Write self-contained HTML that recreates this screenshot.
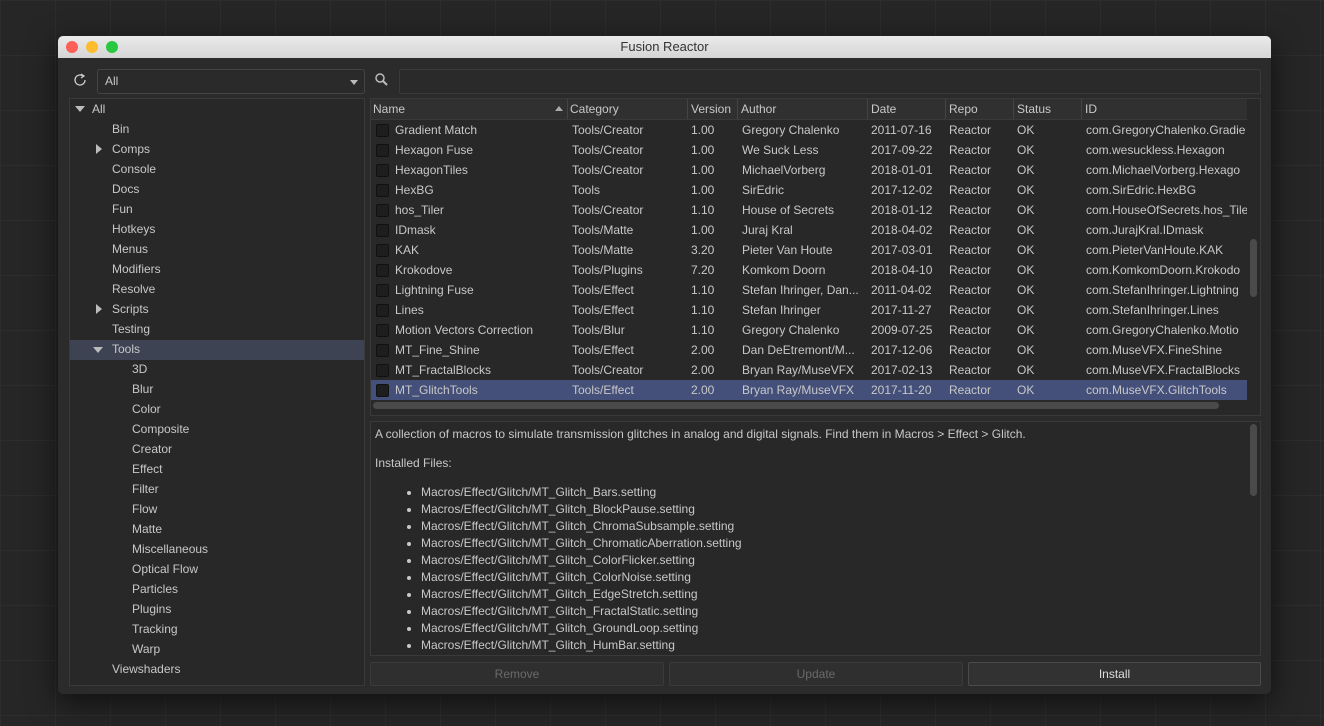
<!DOCTYPE html>
<html><head><style>
body{margin:0;width:1324px;height:726px;background:#262626;font-family:"Liberation Sans",sans-serif;font-size:12px;color:#c8c8c8;position:relative;overflow:hidden;
background-image:linear-gradient(#2d2d2d 1px,transparent 1px),linear-gradient(90deg,#2d2d2d 1px,transparent 1px);background-size:55px 55px;}
.a{position:absolute}
#win{left:58px;top:36px;width:1213px;height:658px;background:#2b2b2b;border-radius:5px;overflow:hidden;box-shadow:0 8px 30px rgba(0,0,0,.6)}
#title{left:0;top:0;width:1213px;height:22px;background:linear-gradient(#ebebeb,#d5d5d5);color:#333;text-align:center;line-height:22px;font-size:13px}
.dot{top:5px;width:12px;height:12px;border-radius:50%}
.t{position:absolute;white-space:nowrap;line-height:20px}
.tri{position:absolute;width:0;height:0}
.row{position:absolute;left:0;width:876px;height:20px}
.cb{position:absolute;left:5px;top:4px;width:11px;height:11px;background:#1e1e1e;border:1px solid #111;border-radius:2px}
.btn{position:absolute;top:626px;height:22px;border:1px solid #3a3a3a;background:#2f2f2f;border-radius:2px;text-align:center;line-height:22px}
li{line-height:17px}
</style></head><body>
<div id="win" class="a">
<div id="title" class="a">Fusion Reactor</div>
<div class="a dot" style="left:8px;background:#fc5f57"></div>
<div class="a dot" style="left:28px;background:#fdbc2e"></div>
<div class="a dot" style="left:48px;background:#28c840"></div>
<svg class="a" style="left:14px;top:36px" width="16" height="16" viewBox="0 0 16 16"><path d="M13 8a5 5 0 1 1-2-4" fill="none" stroke="#ccc" stroke-width="1.3"/><path d="M9 2l3 2-3 2" fill="none" stroke="#ccc" stroke-width="1.3"/></svg>
<div class="a" style="left:39px;top:33px;width:266px;height:23px;border:1px solid #444;border-radius:3px;background:#2a2a2a"><span class="t" style="left:7px;top:1px">All</span><div class="tri" style="left:252px;top:10px;border-left:4px solid transparent;border-right:4px solid transparent;border-top:5px solid #bbb"></div></div>
<svg class="a" style="left:316px;top:36px" width="16" height="16" viewBox="0 0 16 16"><circle cx="6" cy="6" r="4" fill="none" stroke="#bbb" stroke-width="1.5"/><path d="M9 9l4 4" stroke="#bbb" stroke-width="2"/></svg>
<div class="a" style="left:341px;top:33px;width:860px;height:23px;border:1px solid #3a3a3a;border-radius:2px;background:#2a2a2a"></div>
<div class="a" style="left:11px;top:62px;width:294px;height:586px;border:1px solid #3a3a3a;background:#282828">
<div class="a" style="left:0;top:241px;width:294px;height:20px;background:#3d4353"></div>
<div class="tri" style="left:5px;top:7px;border-left:5px solid transparent;border-right:5px solid transparent;border-top:6px solid #bbb"></div>
<span class="t" style="left:22px;top:0">All</span>
<span class="t" style="left:42px;top:20px">Bin</span>
<div class="tri" style="left:26px;top:45px;border-top:5px solid transparent;border-bottom:5px solid transparent;border-left:6px solid #bbb"></div>
<span class="t" style="left:42px;top:40px">Comps</span>
<span class="t" style="left:42px;top:60px">Console</span>
<span class="t" style="left:42px;top:80px">Docs</span>
<span class="t" style="left:42px;top:100px">Fun</span>
<span class="t" style="left:42px;top:120px">Hotkeys</span>
<span class="t" style="left:42px;top:140px">Menus</span>
<span class="t" style="left:42px;top:160px">Modifiers</span>
<span class="t" style="left:42px;top:180px">Resolve</span>
<div class="tri" style="left:26px;top:205px;border-top:5px solid transparent;border-bottom:5px solid transparent;border-left:6px solid #bbb"></div>
<span class="t" style="left:42px;top:200px">Scripts</span>
<span class="t" style="left:42px;top:220px">Testing</span>
<div class="tri" style="left:23px;top:248px;border-left:5px solid transparent;border-right:5px solid transparent;border-top:6px solid #bbb"></div>
<span class="t" style="left:42px;top:240px">Tools</span>
<span class="t" style="left:62px;top:260px">3D</span>
<span class="t" style="left:62px;top:280px">Blur</span>
<span class="t" style="left:62px;top:300px">Color</span>
<span class="t" style="left:62px;top:320px">Composite</span>
<span class="t" style="left:62px;top:340px">Creator</span>
<span class="t" style="left:62px;top:360px">Effect</span>
<span class="t" style="left:62px;top:380px">Filter</span>
<span class="t" style="left:62px;top:400px">Flow</span>
<span class="t" style="left:62px;top:420px">Matte</span>
<span class="t" style="left:62px;top:440px">Miscellaneous</span>
<span class="t" style="left:62px;top:460px">Optical Flow</span>
<span class="t" style="left:62px;top:480px">Particles</span>
<span class="t" style="left:62px;top:500px">Plugins</span>
<span class="t" style="left:62px;top:520px">Tracking</span>
<span class="t" style="left:62px;top:540px">Warp</span>
<span class="t" style="left:42px;top:560px">Viewshaders</span>
</div>
<div class="a" style="left:312px;top:62px;width:889px;height:316px;border:1px solid #3a3a3a;background:#282828;overflow:hidden">
<div class="a" style="left:0;top:0;width:876px;height:20px;background:#303030;border-bottom:1px solid #3a3a3a"></div>
<div class="a" style="left:196px;top:0;width:1px;height:20px;background:#444"></div>
<div class="a" style="left:316px;top:0;width:1px;height:20px;background:#444"></div>
<div class="a" style="left:366px;top:0;width:1px;height:20px;background:#444"></div>
<div class="a" style="left:496px;top:0;width:1px;height:20px;background:#444"></div>
<div class="a" style="left:574px;top:0;width:1px;height:20px;background:#444"></div>
<div class="a" style="left:642px;top:0;width:1px;height:20px;background:#444"></div>
<div class="a" style="left:710px;top:0;width:1px;height:20px;background:#444"></div>
<span class="t" style="left:2px;top:0">Name</span><div class="tri" style="left:184px;top:7px;border-left:4px solid transparent;border-right:4px solid transparent;border-bottom:5px solid #aaa"></div>
<span class="t" style="left:199px;top:0">Category</span><span class="t" style="left:320px;top:0">Version</span><span class="t" style="left:370px;top:0">Author</span><span class="t" style="left:500px;top:0">Date</span><span class="t" style="left:578px;top:0">Repo</span><span class="t" style="left:646px;top:0">Status</span><span class="t" style="left:714px;top:0">ID</span>
<div id="rows"></div>
<div class="a" style="left:0;top:301px;width:848px;height:10px"><div class="a" style="left:2px;top:2px;width:846px;height:7px;background:#4a4a4a;border-radius:4px"></div></div>
<div class="a" style="left:879px;top:140px;width:7px;height:58px;background:#4a4a4a;border-radius:4px"></div>
</div>
<div class="a" style="left:312px;top:385px;width:889px;height:233px;border:1px solid #3a3a3a;background:#282828;overflow:hidden">
<div class="t" style="left:4px;top:2px">A collection of macros to simulate transmission glitches in analog and digital signals. Find them in Macros &gt; Effect &gt; Glitch.</div>
<div class="t" style="left:4px;top:31px">Installed Files:</div>
<ul class="a" style="left:10px;top:62px;margin:0;padding-left:40px">
<li>Macros/Effect/Glitch/MT_Glitch_Bars.setting</li>
<li>Macros/Effect/Glitch/MT_Glitch_BlockPause.setting</li>
<li>Macros/Effect/Glitch/MT_Glitch_ChromaSubsample.setting</li>
<li>Macros/Effect/Glitch/MT_Glitch_ChromaticAberration.setting</li>
<li>Macros/Effect/Glitch/MT_Glitch_ColorFlicker.setting</li>
<li>Macros/Effect/Glitch/MT_Glitch_ColorNoise.setting</li>
<li>Macros/Effect/Glitch/MT_Glitch_EdgeStretch.setting</li>
<li>Macros/Effect/Glitch/MT_Glitch_FractalStatic.setting</li>
<li>Macros/Effect/Glitch/MT_Glitch_GroundLoop.setting</li>
<li>Macros/Effect/Glitch/MT_Glitch_HumBar.setting</li>
</ul>
<div class="a" style="left:879px;top:2px;width:7px;height:72px;background:#4a4a4a;border-radius:4px"></div>
</div>
<div class="btn" style="left:312px;width:292px;color:#6a6a6a">Remove</div>
<div class="btn" style="left:611px;width:292px;color:#6a6a6a">Update</div>
<div class="btn" style="left:910px;width:291px;color:#ddd;background:#323232;border-color:#4a4a4a">Install</div>
</div>
<script>
var d=[["Gradient Match","Tools/Creator","1.00","Gregory Chalenko","2011-07-16","com.GregoryChalenko.Gradie"],
["Hexagon Fuse","Tools/Creator","1.00","We Suck Less","2017-09-22","com.wesuckless.Hexagon"],
["HexagonTiles","Tools/Creator","1.00","MichaelVorberg","2018-01-01","com.MichaelVorberg.Hexago"],
["HexBG","Tools","1.00","SirEdric","2017-12-02","com.SirEdric.HexBG"],
["hos_Tiler","Tools/Creator","1.10","House of Secrets","2018-01-12","com.HouseOfSecrets.hos_Tile"],
["IDmask","Tools/Matte","1.00","Juraj Kral","2018-04-02","com.JurajKral.IDmask"],
["KAK","Tools/Matte","3.20","Pieter Van Houte","2017-03-01","com.PieterVanHoute.KAK"],
["Krokodove","Tools/Plugins","7.20","Komkom Doorn","2018-04-10","com.KomkomDoorn.Krokodo"],
["Lightning Fuse","Tools/Effect","1.10","Stefan Ihringer, Dan...","2011-04-02","com.StefanIhringer.Lightning"],
["Lines","Tools/Effect","1.10","Stefan Ihringer","2017-11-27","com.StefanIhringer.Lines"],
["Motion Vectors Correction","Tools/Blur","1.10","Gregory Chalenko","2009-07-25","com.GregoryChalenko.Motio"],
["MT_Fine_Shine","Tools/Effect","2.00","Dan DeEtremont/M...","2017-12-06","com.MuseVFX.FineShine"],
["MT_FractalBlocks","Tools/Creator","2.00","Bryan Ray/MuseVFX","2017-02-13","com.MuseVFX.FractalBlocks"],
["MT_GlitchTools","Tools/Effect","2.00","Bryan Ray/MuseVFX","2017-11-20","com.MuseVFX.GlitchTools"]];
var h="";d.forEach(function(r,i){var top=21+i*20;var sel=i==13;
h+='<div class="row" style="top:'+top+'px;'+(sel?'background:#44507a;':'')+'"><div class="cb"></div>'+
'<span class="t" style="left:24px;top:0">'+r[0]+'</span><span class="t" style="left:201px;top:0">'+r[1]+'</span><span class="t" style="left:320px;top:0">'+r[2]+'</span><span class="t" style="left:371px;top:0">'+r[3]+'</span><span class="t" style="left:500px;top:0">'+r[4]+'</span><span class="t" style="left:578px;top:0">Reactor</span><span class="t" style="left:646px;top:0">OK</span><span class="t" style="left:715px;top:0;width:161px;overflow:hidden">'+r[5]+'</span></div>';});
document.getElementById("rows").innerHTML=h;
</script>
</body></html>
